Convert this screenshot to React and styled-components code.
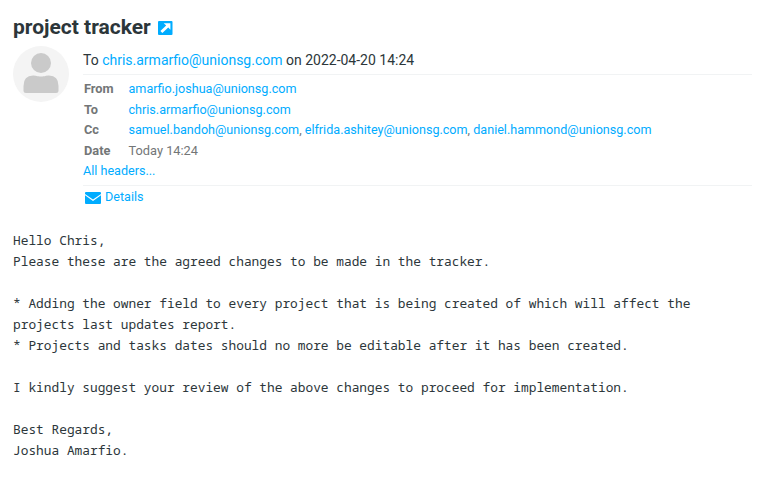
import React from 'react';
import styled, { createGlobalStyle } from 'styled-components';

const Global = createGlobalStyle`
  * { box-sizing: border-box; }
  body { margin: 0; background: #fff; color: #2c363a; font-family: Roboto, sans-serif; font-size: 14px; }
`;
const Page = styled.main`width: 763px; height: 490px; padding: 12px 11px 0 13px; overflow: hidden;`;
const Subject = styled.h1`
  margin: 0; height: 30px; line-height: 30px; font-size: 21px; font-weight: 700;
  display: flex; align-items: center; gap: 7.5px;
  svg { display: block; margin-top: 2px; }
`;
const Header = styled.header`display: flex; gap: 14px; padding-top: 4px;`;
const Avatar = styled.svg`width: 56px; height: 56px; flex: none; display: block;`;
const Info = styled.div`flex: 1; min-width: 0;`;
const Summary = styled.div`
  height: 29px; line-height: 29px; border-bottom: 1px solid #f1f3f4; white-space: nowrap;
`;
const Link = styled.a`color: #00acff; text-decoration: none;`;
const Fields = styled.div`
  display: grid; grid-template-columns: 44.5px 1fr; grid-auto-rows: 20.6px;
  padding: 4px 0 0 1px; font-size: 12.6px; line-height: 20.6px; white-space: nowrap;
`;
const Label = styled.span`font-size: 12.8px; font-weight: 700; color: #737677;`;
const Value = styled.span`color: #737677; font-size: ${({ $plain }) => ($plain ? '12.8px' : 'inherit')};`;
const AllHeaders = styled.div`height: 25px; line-height: 20px; font-size: 12.6px; border-bottom: 1px solid #f1f3f4;`;
const Details = styled.div`
  display: flex; align-items: flex-start; gap: 4px; padding: 1px 0 0 2px; height: 22px; line-height: 20px; font-size: 12.6px;
  svg { margin-top: 5px; }
`;
const Message = styled.pre`
  margin: 22px 0 0; font: 12.83px/21px "Noto Sans Mono", "DejaVu Sans Mono", monospace; color: #2c363a;
`;

const people = ['samuel.bandoh@unionsg.com', 'elfrida.ashitey@unionsg.com', 'daniel.hammond@unionsg.com'];
const body = `Hello Chris,
Please these are the agreed changes to be made in the tracker.

* Adding the owner field to every project that is being created of which will affect the
projects last updates report.
* Projects and tasks dates should no more be editable after it has been created.

I kindly suggest your review of the above changes to proceed for implementation.

Best Regards,
Joshua Amarfio.`;

export default function App() {
  return (
    <Page>
      <Global />
      <Subject>
        <span>project tracker</span>
        <svg width="14.500" height="14" viewBox="0 0 14 14" preserveAspectRatio="none">
          <rect width="14" height="14" rx="1" fill="#00acff" />
          <path d="M5.500 2.200H12V8.700L9.900 6.600 4.200 12 2.300 10.100l5.600-5.500z" fill="#fff" />
        </svg>
      </Subject>
      <Header>
        <Avatar viewBox="0 0 56 56">
          <circle cx="28" cy="28" r="28" fill="#f4f4f4" />
          <circle cx="28" cy="17" r="10" fill="#cacaca" />
          <path d="M10.500 44.500v-4.500q0-10.500 9.500-10.500c3 0 4 1 8 1s5-1 8-1q9.500 0 9.500 10.500v4.500q0 2.500-2.500 2.500h-30q-2.500 0-2.500-2.500z" fill="#cacaca" />
        </Avatar>
        <Info>
          <Summary>To <Link>chris.armarfio@unionsg.com</Link> on 2022-04-20 14:24</Summary>
          <Fields>
            <Label>From</Label><Value><Link>amarfio.joshua@unionsg.com</Link></Value>
            <Label>To</Label><Value><Link>chris.armarfio@unionsg.com</Link></Value>
            <Label>Cc</Label>
            <Value>{people.map((p, i) => <React.Fragment key={p}>{i > 0 && ', '}<Link>{p}</Link></React.Fragment>)}</Value>
            <Label>Date</Label><Value $plain>Today 14:24</Value>
          </Fields>
          <AllHeaders><Link>All headers...</Link></AllHeaders>
          <Details>
            <svg width="16" height="12" viewBox="0 0 16 12">
              <path d="M0 1Q0 0 1 0h14Q16 0 16 1v1L8 7.500 0 2zM0 3.200l8 5.700 8-5.700V11q0 1-1 1H1Q0 12 0 11z" fill="#00acff" />
            </svg>
            <Link>Details</Link>
          </Details>
        </Info>
      </Header>
      <Message>{body}</Message>
    </Page>
  );
}
